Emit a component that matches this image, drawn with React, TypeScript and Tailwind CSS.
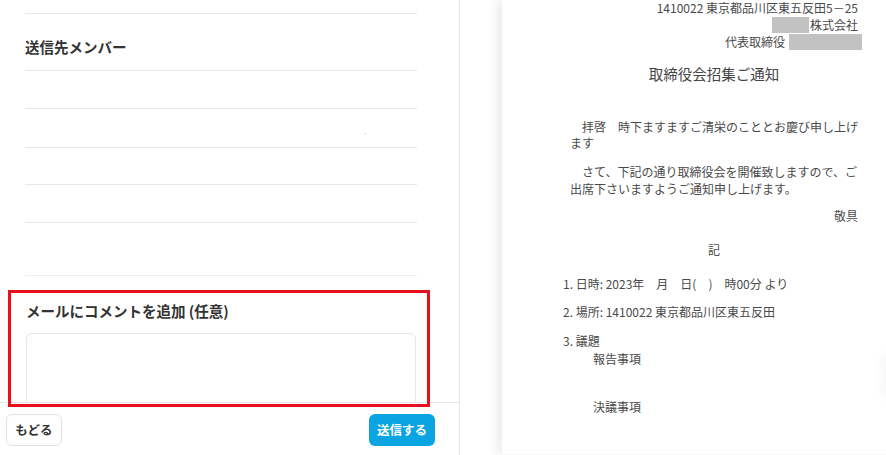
import React from "react";

const jp = { fontFamily: '"Noto Sans CJK JP", "Noto Sans", sans-serif' };

export default function App() {
  return (
    <div
      className="relative flex w-[886px] h-[455px] overflow-hidden bg-white text-[#333]"
      style={jp}
    >
      {/* Left panel */}
      <div className="flex flex-col w-[460px] h-full border-r border-[#e6e6e6] shrink-0">
        <div className="flex-1 overflow-hidden">
          <div className="ml-[25px] w-[392px]">
            <div className="h-[14px] border-b border-[#e8e8e8]" />
            <div className="h-[57px] border-b border-[#e8e8e8] flex items-center pt-[11px]">
              <h2 className="text-[14.5px] font-bold leading-none text-[#333]">送信先メンバー</h2>
            </div>
            <div className="h-[38px] border-b border-[#e8e8e8]" />
            <div className="relative h-[39px] border-b border-[#e8e8e8]">
              <span className="absolute left-[340px] top-[24px] w-[1px] h-[1px] bg-[#b8c49a]" />
            </div>
            <div className="h-[37px] border-b border-[#e8e8e8]" />
            <div className="h-[38px] border-b border-[#e8e8e8]" />
            <div className="h-[53px] border-b border-[#ececec]" />
          </div>
          <div className="ml-[26px] w-[390px]">
            <h3 className="mt-[26px] text-[14.5px] font-bold leading-[18px] text-[#333]">
              メールにコメントを追加 (任意)
            </h3>
            <div className="mt-[13px] h-[90px] rounded-md border border-[#e6e6e6] bg-white" />
          </div>
        </div>
        <div className="h-[53px] shrink-0 border-t border-[#e6e6e6] flex items-start justify-between pl-[6px] pr-[24px] pt-[11px]">
          <button className="h-[32px] w-[56px] rounded-md border border-[#e3e3e3] bg-white text-[12.5px] font-bold text-[#333]">
            もどる
          </button>
          <button className="h-[32px] w-[66px] rounded-md bg-[#0ba4e2] text-[12.5px] font-bold text-white">
            送信する
          </button>
        </div>
      </div>

      {/* Right preview */}
      <div className="relative flex-1 h-full bg-white pl-[42px]">
        <div className="h-full w-[420px] bg-white shadow-[-6px_0_10px_rgba(0,0,0,0.07)] pl-[61px]">
          <div className="w-[295px] text-[12px] text-[#4a4a4a]">
            <div className="-mt-[1px] flex flex-col items-end leading-[17px]">
              <div className="h-[17px] whitespace-nowrap">1410022 東京都品川区東五反田5－25</div>
              <div className="h-[17px] flex items-center whitespace-nowrap">
                <span className="inline-block w-[37px] h-[16px] bg-[#c2c2c2] mr-[1px]" />
                株式会社
              </div>
              <div className="h-[17px] flex items-center whitespace-nowrap -mr-[4px]">
                代表取締役
                <span className="inline-block w-[73px] h-[16px] bg-[#c2c2c2] ml-[4px]" />
              </div>
            </div>
            <div className="pl-[7px]">
              <div className="mt-[14px] text-center text-[14.5px] leading-[20px] text-[#444]">
                取締役会招集ご通知
              </div>
              <p className="mt-[35px] leading-[16px] whitespace-nowrap">
                {"\u3000拝啓\u3000時下ますますご清栄のこととお慶び申し上げ"}
                <br />
                ます
              </p>
              <p className="mt-[12px] leading-[17px] whitespace-nowrap">
                {"\u3000さて、下記の通り取締役会を開催致しますので、ご"}
                <br />
                出席下さいますようご通知申し上げます。
              </p>
              <div className="mt-[10px] text-right leading-[17px]">敬具</div>
              <div className="mt-[17px] text-center leading-[17px]">記</div>
            </div>
            <div className="mt-[17px] leading-[17px] whitespace-nowrap">
              {"1. 日時: 2023年\u3000月\u3000日(\u3000)\u3000時00分 より"}
            </div>
            <div className="mt-[11px] leading-[17px] whitespace-nowrap">
              2. 場所: 1410022 東京都品川区東五反田
            </div>
            <div className="mt-[12px] leading-[17px] whitespace-nowrap">3. 議題</div>
            <div className="pl-[30px] mt-[1px] leading-[17px]">報告事項</div>
            <div className="pl-[30px] mt-[31px] leading-[17px]">決議事項</div>
          </div>
        </div>
        <div className="absolute right-0 top-[352px] w-[34px] h-[47px] rounded-l-md bg-white shadow-[0_0_16px_rgba(0,0,0,0.08)]" />
      </div>

      {/* Red annotation box */}
      <div className="absolute left-[8px] top-[290px] w-[422px] h-[117px] border-[3px] border-[#e8101c] pointer-events-none" />
    </div>
  );
}
